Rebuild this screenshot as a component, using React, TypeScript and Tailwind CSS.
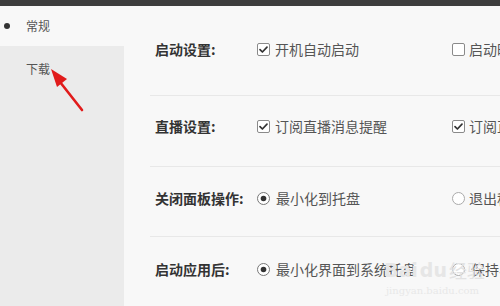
import React from "react";

const font = { fontFamily: '"Noto Sans CJK SC", "Noto Sans", sans-serif' };

function Check({ checked }: { checked: boolean }) {
  return (
    <svg width="13" height="13" viewBox="0 0 13 13" className="shrink-0">
      <rect x="0.5" y="0.5" width="12" height="12" rx="1.5" fill="#fff" stroke="#8a8a8a" />
      {checked && <path d="M3 6.6 L5.4 9 L10 4.2" fill="none" stroke="#333" strokeWidth="1.7" strokeLinecap="round" strokeLinejoin="round" />}
    </svg>
  );
}

function Radio({ checked }: { checked: boolean }) {
  return (
    <svg width="13" height="13" viewBox="0 0 13 13" className="shrink-0">
      <circle cx="6.5" cy="6.5" r="6" fill="#fff" stroke={checked ? "#777" : "#aaa"} />
      {checked && <circle cx="6.5" cy="6.5" r="2.8" fill="#333" />}
    </svg>
  );
}

function Option({ kind, checked, label, gap }: { kind: "c" | "r"; checked: boolean; label: string; gap: string }) {
  return (
    <div className={`flex items-center ${gap} w-[195px] shrink-0 whitespace-nowrap`}>
      {kind === "c" ? <Check checked={checked} /> : <Radio checked={checked} />}
      <span className="text-[14px] text-[#555] leading-5">{label}</span>
    </div>
  );
}

function Row({ label, children, cls }: { label: string; children: React.ReactNode; cls: string }) {
  return (
    <div className={`flex items-start border-b border-[#e8e8e8] ${cls}`}>
      <div className="w-[107px] shrink-0 pl-[5px] text-[14px] font-bold text-[#333] leading-5 whitespace-nowrap">{label}</div>
      <div className="flex overflow-hidden">{children}</div>
    </div>
  );
}

export default function App() {
  return (
    <div className="relative w-[500px] h-[306px] overflow-hidden flex flex-col bg-[#f8f8f8]" style={font}>
      <div className="h-[6px] bg-[#3d3d3d] shrink-0" />
      <div className="flex flex-1">
        <div className="w-[124px] flex flex-col shrink-0">
          <div className="h-[40px] flex items-center bg-[#f8f8f8]">
            <div className="w-[6px] h-[6px] rounded-full bg-[#333] ml-[4px]" />
            <span className="ml-[16px] text-[12px] text-[#555] leading-5">常规</span>
          </div>
          <div className="flex-1 bg-[#ebebeb] pt-[9px] pl-[26px]">
            <span className="text-[12px] text-[#555] leading-5">下载</span>
          </div>
        </div>
        <div className="flex-1 ml-[26px] flex flex-col overflow-hidden">
          <Row label="启动设置:" cls="h-[90px] pt-[33px]">
            <Option kind="c" checked label="开机自动启动" gap="gap-[5px]" />
            <Option kind="c" checked={false} label="启动时自动" gap="gap-[4px]" />
          </Row>
          <Row label="直播设置:" cls="h-[71px] pt-[20px]">
            <Option kind="c" checked label="订阅直播消息提醒" gap="gap-[5px]" />
            <Option kind="c" checked label="订阅直播" gap="gap-[4px]" />
          </Row>
          <Row label="关闭面板操作:" cls="h-[70px] pt-[21px]">
            <Option kind="r" checked label="最小化到托盘" gap="gap-[6px]" />
            <Option kind="r" checked={false} label="退出程序" gap="gap-[4px]" />
          </Row>
          <div className="flex items-start pt-[22px]">
            <div className="w-[107px] shrink-0 pl-[5px] text-[14px] font-bold text-[#333] leading-5 whitespace-nowrap">启动应用后:</div>
            <div className="flex overflow-hidden">
              <Option kind="r" checked label="最小化界面到系统托盘" gap="gap-[6px]" />
              <Option kind="r" checked={false} label="保持界面" gap="gap-[6px]" />
            </div>
          </div>
        </div>
      </div>
      {/* red arrow */}
      <svg className="absolute left-0 top-0 pointer-events-none" width="120" height="130" viewBox="0 0 120 130">
        <line x1="60" y1="82" x2="82" y2="110" stroke="#e11b1b" strokeWidth="2.6" strokeLinecap="round" />
        <polygon points="51,69 67,79 57,87" fill="#e11b1b" />
      </svg>
      {/* watermark */}
      <div className="absolute left-[384px] top-[258px] flex items-end pointer-events-none">
        <span className="text-[19px] font-bold text-[#e6e6e6] leading-6" style={{ fontFamily: '"DejaVu Sans", sans-serif' }}>Bai</span>
        <span className="text-[19px] font-bold text-[#e6e6e6] leading-6 ml-[2px]" style={{ fontFamily: '"DejaVu Sans", sans-serif' }}>du</span>
        <span className="text-[18px] text-[#e2e2e2] leading-6 ml-[2px]">经验</span>
      </div>
      <div className="absolute left-[386px] top-[283px] text-[10px] text-[#e8e8e8] pointer-events-none" style={{ fontFamily: '"DejaVu Serif", serif' }}>jingyan.baidu.com</div>
    </div>
  );
}
